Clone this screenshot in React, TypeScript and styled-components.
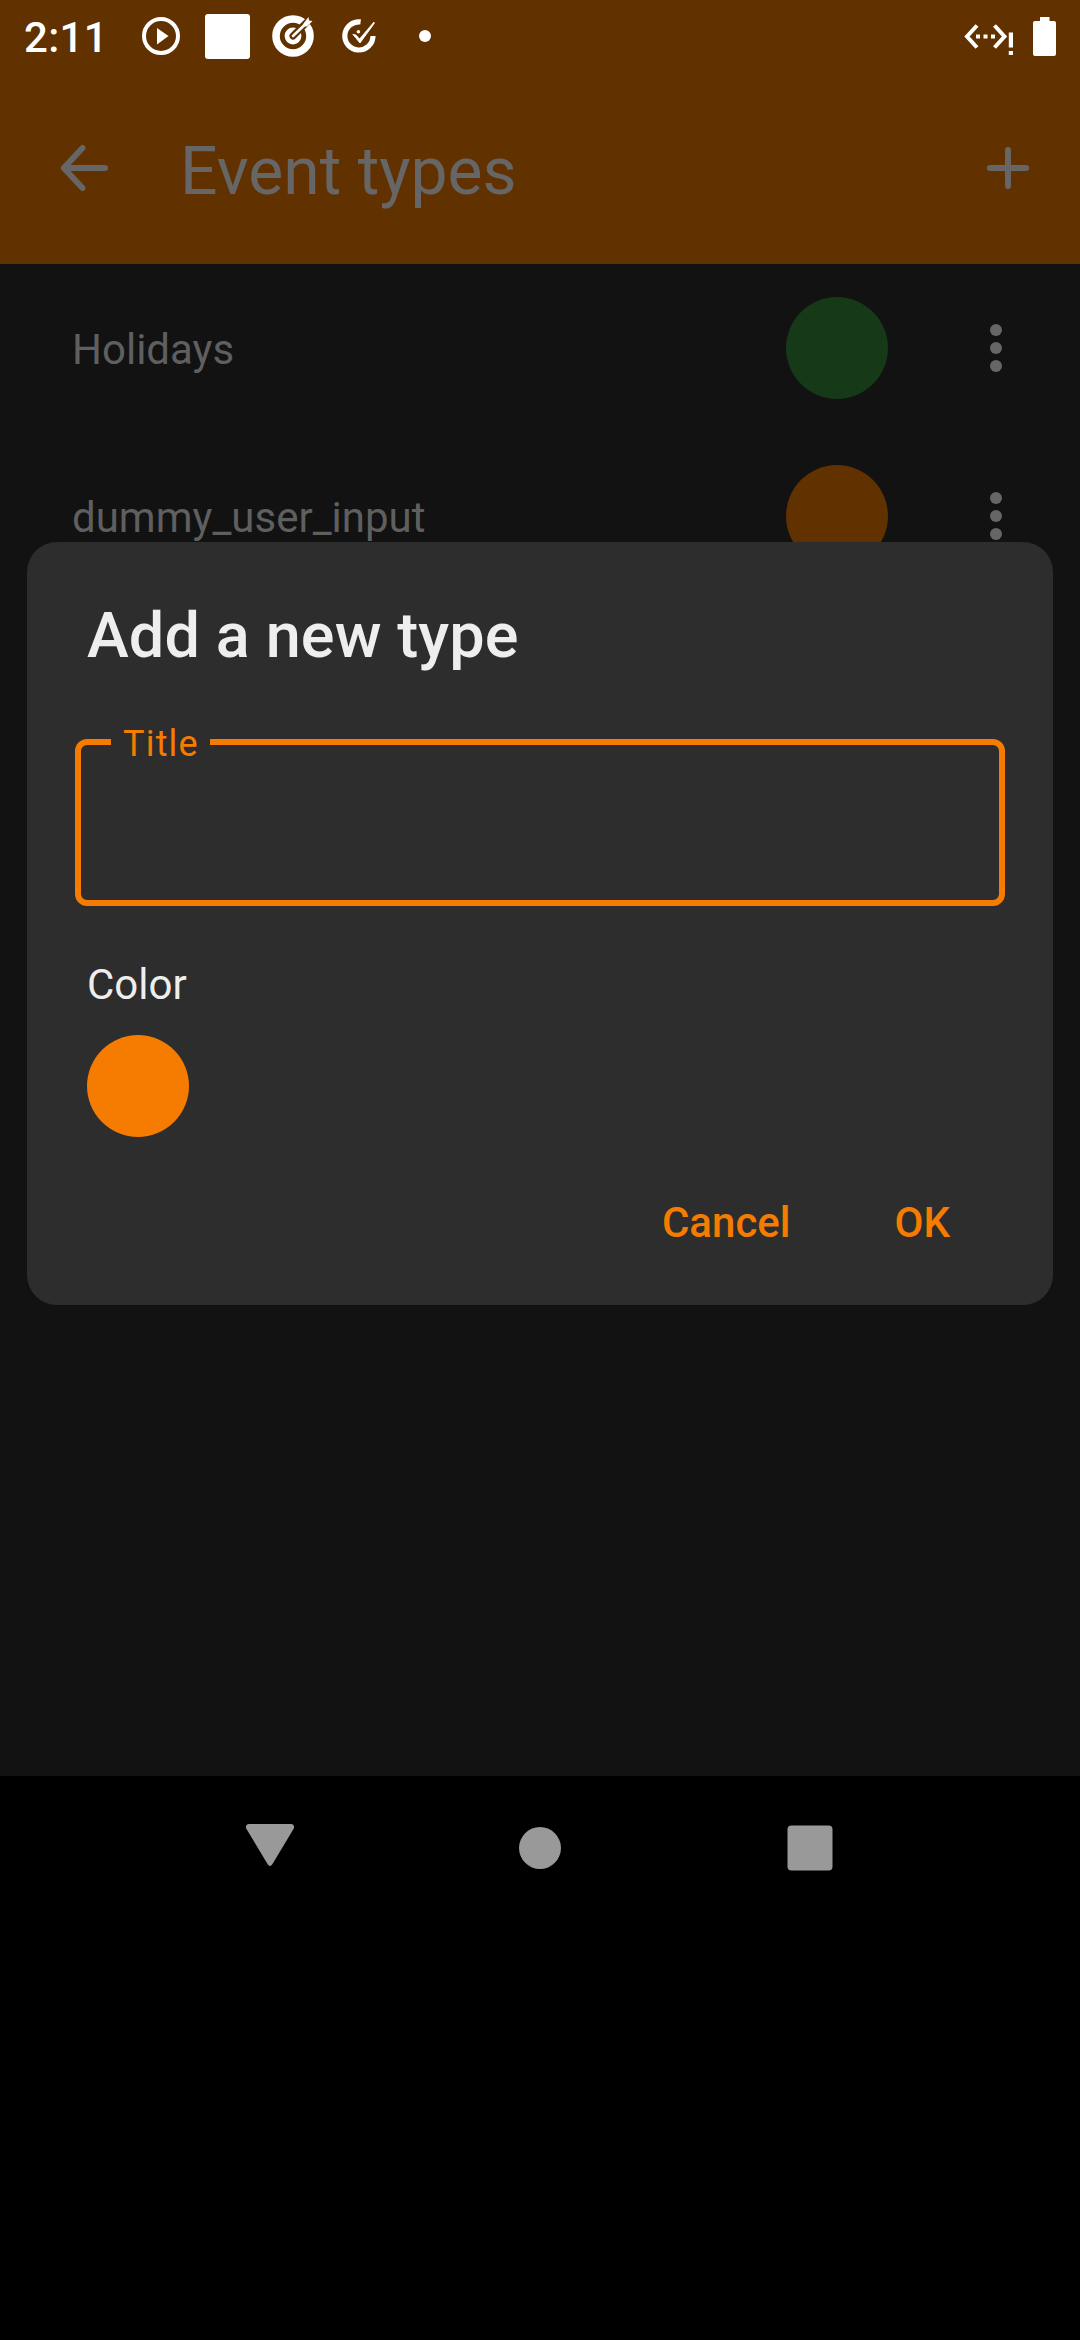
import React from 'react';
import styled, { createGlobalStyle } from 'styled-components';

const ORANGE = '#f57c00';
const DIM_ORANGE = '#623100';

const GlobalStyle = createGlobalStyle`
  * { box-sizing: border-box; }
  body { margin: 0; background: #000; }
  button { background: none; border: 0; padding: 0; margin: 0; font: inherit; color: inherit; }
  svg { display: block; }
`;

const Screen = styled.div`
  position: relative;
  display: flex;
  flex-direction: column;
  width: 1080px;
  height: 2340px;
  overflow: hidden;
  background: #000;
  font-family: Roboto, 'Liberation Sans', sans-serif;
`;

const StatusBar = styled.header`
  display: flex;
  align-items: center;
  justify-content: space-between;
  height: 72px;
  padding: 0 24px;
  background: ${DIM_ORANGE};
  color: #fff;
`;

const StatusGroup = styled.div`
  display: flex;
  align-items: center;
  height: 72px;
`;

const Clock = styled.time`
  width: 104px;
  padding-top: 3px;
  font-size: 42px;
  font-weight: 500;
  line-height: 50px;
  letter-spacing: 0.3px;
`;

const Slot = styled.div<{ $width: number }>`
  display: flex;
  justify-content: center;
  width: ${(p) => p.$width}px;
`;

const WhiteTile = styled.div`
  width: 45px;
  height: 45px;
  border-radius: 3px;
  background: #fff;
`;

const MoreDot = styled.div`
  width: 12px;
  height: 12px;
  border-radius: 50%;
  background: #fff;
`;

const Toolbar = styled.nav`
  display: flex;
  align-items: center;
  height: 192px;
  padding: 0 36px 0 48px;
  background: ${DIM_ORANGE};
  color: #666;
`;

const ToolbarTitle = styled.h1`
  flex: 1;
  margin: 0;
  padding: 8px 0 0 60px;
  font-size: 66px;
  font-weight: 400;
  line-height: 78px;
`;

const IconButton = styled.button`
  display: flex;
  width: 72px;
  height: 72px;
`;

const List = styled.main`
  display: flex;
  flex-direction: column;
  height: 1512px;
  background: #121212;
`;

const Row = styled.div`
  display: flex;
  align-items: center;
  height: 168px;
  padding: 0 48px 0 72px;
  color: #5f5f5f;
`;

const RowName = styled.span`
  flex: 1;
  padding-top: 3px;
  font-size: 42px;
  line-height: 50px;
`;

const Swatch = styled.div<{ $color: string }>`
  width: 102px;
  height: 102px;
  border-radius: 50%;
  background: ${(p) => p.$color};
`;

const RowMenu = styled(IconButton)`
  margin-left: 72px;
  flex-direction: column;
  justify-content: center;
  align-items: center;
  gap: 6px;
`;

const MenuDot = styled.i`
  width: 12px;
  height: 12px;
  border-radius: 50%;
  background: #666;
`;

const Dialog = styled.section`
  position: absolute;
  left: 27px;
  top: 542px;
  display: flex;
  flex-direction: column;
  width: 1026px;
  height: 763px;
  padding: 56px 48px 0;
  border-radius: 30px;
  background: #2d2d2d;
  color: #eee;
`;

const DialogTitle = styled.h2`
  margin: 0 0 0 12px;
  height: 74px;
  font-size: 63px;
  font-weight: 500;
  line-height: 76px;
  letter-spacing: 0.1px;
`;

const Field = styled.fieldset`
  height: 185px;
  min-width: 0;
  margin: 49px 0 0;
  padding: 0;
  border: 6px solid ${ORANGE};
  border-radius: 12px;
`;

const FieldLabel = styled.legend`
  width: 99px;
  height: 42px;
  margin-left: 30px;
  padding: 0 0 0 12px;
  color: ${ORANGE};
  font-size: 36px;
  line-height: 47px;
  letter-spacing: 1.2px;
  white-space: nowrap;
`;

const ColorSection = styled.div`
  display: flex;
  flex-direction: column;
  gap: 25px;
  margin: 54px 0 0 12px;
`;

const ColorLabel = styled.span`
  font-size: 42px;
  line-height: 50px;
`;

const Actions = styled.div`
  display: flex;
  justify-content: flex-end;
  gap: 104px;
  margin-top: 61px;
  padding-right: 55px;
  color: ${ORANGE};
  font-size: 42px;
  font-weight: 500;
  line-height: 50px;
`;

const ActionButton = styled.button`
  white-space: nowrap;
`;

const NavBar = styled.footer`
  display: flex;
  justify-content: center;
  gap: 198px;
  height: 144px;
  background: #000;
`;

const NavButton = styled(IconButton)`
  margin-top: 36px;
`;

const rows = [
  { name: 'Holidays', color: '#163918' },
  { name: 'dummy_user_input', color: DIM_ORANGE },
];

const PlayIcon = () => (
  <svg width="40" height="40" viewBox="0 0 40 40">
    <circle cx="20" cy="20" r="17" fill="none" stroke="#fff" strokeWidth="4" />
    <path d="M16 12L27.5 20L16 28.5Z" fill="#fff" />
  </svg>
);

const TargetIcon = () => (
  <svg width="44" height="44" viewBox="0 0 44 44">
    <circle cx="22" cy="22" r="17" fill="none" stroke="#fff" strokeWidth="7.6" />
    <circle cx="22" cy="22" r="8.4" fill="#fff" />
    <path d="M22 22L42 2" stroke={DIM_ORANGE} strokeWidth="7" strokeLinecap="round" />
    <path d="M22 22L35 9.5" stroke="#fff" strokeWidth="2.6" strokeLinecap="round" />
    <path d="M32.5 9.5L37.5 3L38 6.5L41.5 7L36 12.5L32.5 12.5Z" fill="#fff" />
  </svg>
);

const CheckRingIcon = () => (
  <svg width="44" height="44" viewBox="0 0 44 44">
    <path
      d="M23.6 7.9A14.1 14.1 0 1 0 36 22"
      fill="none"
      stroke="#fff"
      strokeWidth="5.2"
    />
    <circle cx="21.4" cy="17.8" r="1.8" fill="#fff" />
    <path d="M15.8 20.3L19 21L22.5 25L37 8L37.2 9.5L23 29Z" fill="#fff" stroke="#fff" strokeWidth="0.8" />
  </svg>
);

const EthernetIcon = () => (
  <svg width="52" height="44" viewBox="0 0 52 44">
    <g fill="none" stroke="#fff" strokeWidth="4">
      <path d="M14 11.5L4 22.5L14 33.5" />
      <path d="M31.5 11.5L41.5 22.5L31.5 33.5" />
    </g>
    <path d="M13 20.5h4v4h-4zM20.5 20.5h4v4h-4zM28 20.5h4v4h-4zM45.8 18.5h4.2v15h-4.2zM45.8 37h4.2v4h-4.2z" fill="#fff" />
  </svg>
);

const BatteryIcon = () => (
  <svg width="23" height="39" viewBox="0 0 23 39">
    <path d="M7 0h9.5v4H21a2 2 0 0 1 2 2v31a2 2 0 0 1-2 2H2a2 2 0 0 1-2-2V6a2 2 0 0 1 2-2h5z" fill="#fff" />
  </svg>
);

const BackIcon = () => (
  <svg width="72" height="72" viewBox="0 0 72 72">
    <path d="M57 36H17M34.5 16L15.8 36L34.5 56" fill="none" stroke="currentColor" strokeWidth="6" strokeLinecap="round" strokeLinejoin="round" />
  </svg>
);

const PlusIcon = () => (
  <svg width="72" height="72" viewBox="0 0 72 72">
    <path d="M18 36H54M36 18V54" fill="none" stroke="currentColor" strokeWidth="6" strokeLinecap="round" />
  </svg>
);

export default function App() {
  return (
    <Screen>
      <GlobalStyle />
      <StatusBar>
        <StatusGroup>
          <Clock>2:11</Clock>
          <Slot $width={66}><PlayIcon /></Slot>
          <Slot $width={66}><WhiteTile /></Slot>
          <Slot $width={66}><TargetIcon /></Slot>
          <Slot $width={66}><CheckRingIcon /></Slot>
          <Slot $width={66}><MoreDot /></Slot>
        </StatusGroup>
        <StatusGroup>
          <Slot $width={89}><EthernetIcon /></Slot>
          <Slot $width={23}><BatteryIcon /></Slot>
        </StatusGroup>
      </StatusBar>
      <Toolbar>
        <IconButton aria-label="Back"><BackIcon /></IconButton>
        <ToolbarTitle>Event types</ToolbarTitle>
        <IconButton aria-label="Add"><PlusIcon /></IconButton>
      </Toolbar>
      <List>
        {rows.map((row) => (
          <Row key={row.name}>
            <RowName>{row.name}</RowName>
            <Swatch $color={row.color} />
            <RowMenu aria-label="More">
              <MenuDot />
              <MenuDot />
              <MenuDot />
            </RowMenu>
          </Row>
        ))}
      </List>
      <NavBar>
        <NavButton aria-label="Back">
          <svg width="72" height="72" viewBox="0 0 72 72">
            <path d="M15 12H57Q61 12.5 59.8 16.5L38.5 52Q36 56 33.5 52L12.2 16.5Q11 12.5 15 12Z" fill="#999" />
          </svg>
        </NavButton>
        <NavButton aria-label="Home">
          <svg width="72" height="72" viewBox="0 0 72 72"><circle cx="36" cy="36" r="21" fill="#999" /></svg>
        </NavButton>
        <NavButton aria-label="Recents">
          <svg width="72" height="72" viewBox="0 0 72 72"><rect x="13.5" y="13.5" width="45" height="45" rx="4" fill="#999" /></svg>
        </NavButton>
      </NavBar>
      <Dialog role="dialog">
        <DialogTitle>Add a new type</DialogTitle>
        <Field>
          <FieldLabel>Title</FieldLabel>
        </Field>
        <ColorSection>
          <ColorLabel>Color</ColorLabel>
          <Swatch $color={ORANGE} />
        </ColorSection>
        <Actions>
          <ActionButton>Cancel</ActionButton>
          <ActionButton>OK</ActionButton>
        </Actions>
      </Dialog>
    </Screen>
  );
}
